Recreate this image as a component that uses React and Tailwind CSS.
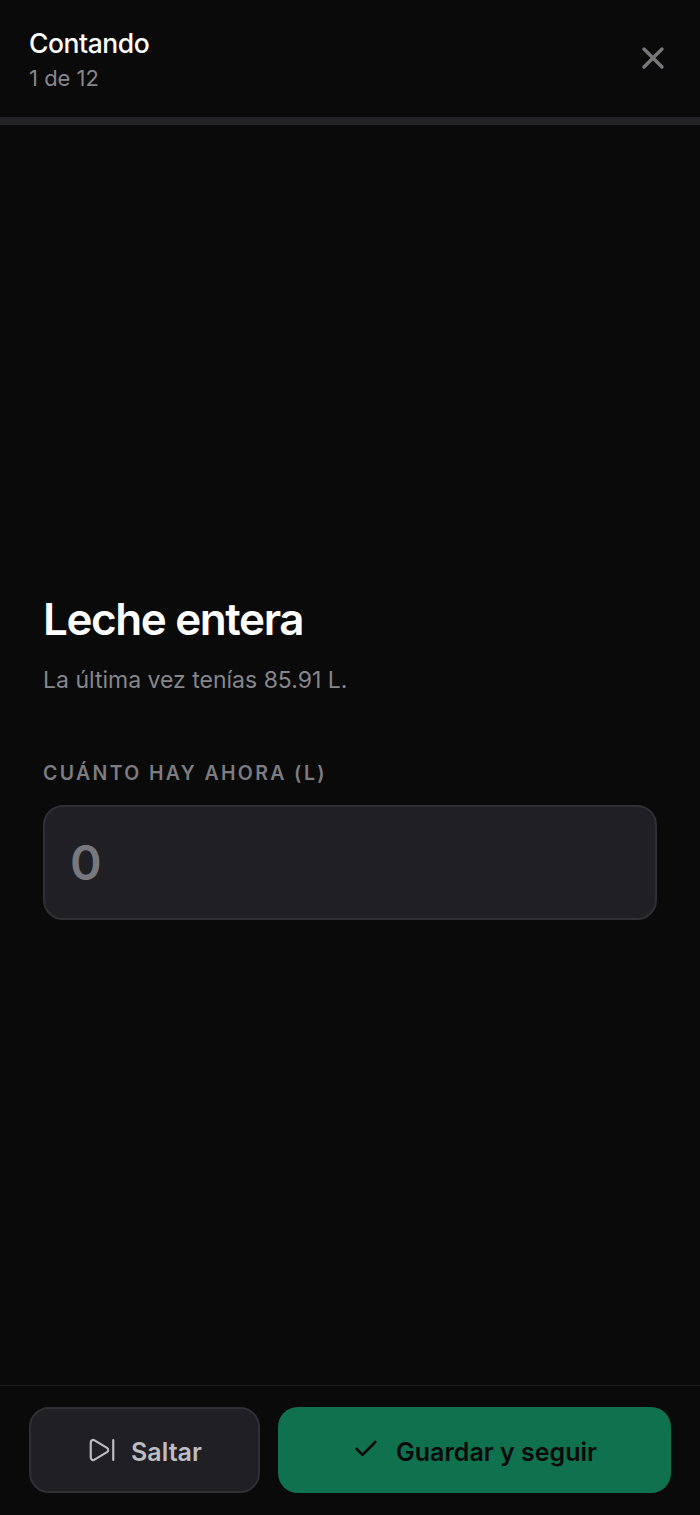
import { X, Check, SkipForward } from 'lucide-react';

export default function App() {
  return (
    <div className="h-[1515px] flex flex-col bg-[#0a0a0b] font-['Inter',sans-serif]">
      <div className="h-[117px] shrink-0 flex items-center justify-between pl-[29px] pr-[29px]">
        <div className="mt-[3px]">
          <h2 className="text-[26.5px] leading-[34px] font-medium tracking-[-0.45px] text-white">Contando</h2>
          <p className="mt-[2px] text-[22px] leading-[32px] text-[#86868b]">1 de 12</p>
        </div>
        <X size={36} strokeWidth={2.25} className="-mt-[1px] text-[#77777c]" />
      </div>
      <div className="h-2 shrink-0 bg-[#232327]" />

      <div className="flex-1 flex flex-col justify-center px-[43px] pt-[3px]">
        <h1 className="text-[44px] leading-[52px] font-semibold tracking-[-1.4px] text-white">Leche entera</h1>
        <p className="mt-[20px] text-[23px] leading-[30px] text-[#86868b]">La última vez tenías 85.91 L.</p>
        <label className="mt-[65px] text-[19.5px] leading-[26px] font-semibold tracking-[2.35px] text-[#7c7c81]">CUÁNTO HAY AHORA (L)</label>
        <div className="mt-[19px] h-[115px] flex items-center px-[25px] rounded-[20px] border-2 border-[#2f2f34] bg-[#1f1f24]">
          <span className="text-[48px] font-semibold text-[#77777c]">0</span>
        </div>
      </div>

      <div className="h-[130px] shrink-0 border-t border-[#1f1f23] flex gap-[18px] pl-[29px] pr-[29px] pt-[21px]">
        <button className="w-[231px] h-[86px] flex items-center justify-center gap-[14px] rounded-[20px] border-2 border-[#2f2f34] bg-[#1f1f24] text-[25px] font-semibold text-[#bcbcc1]">
          <SkipForward size={30} strokeWidth={1.75} className="-mt-[1px]" />
          <span className="mt-[6px]">Saltar</span>
        </button>
        <button className="flex-1 h-[86px] flex items-center justify-center gap-[16px] rounded-[20px] bg-[#10714f] text-[25px] font-semibold text-[#0a0a0b]">
          <Check size={28} strokeWidth={2.25} className="-mt-[3px]" />
          <span className="mt-[6px]">Guardar y seguir</span>
        </button>
      </div>
    </div>
  );
}
